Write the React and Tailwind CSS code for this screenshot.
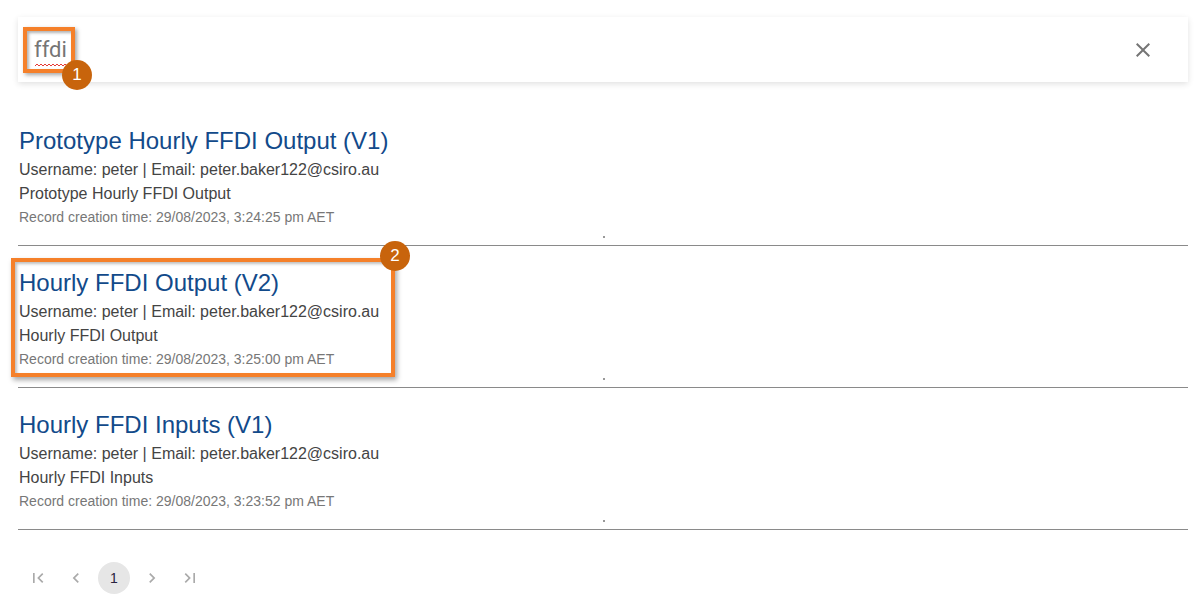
import React from 'react';

const records = [
  {
    title: 'Prototype Hourly FFDI Output (V1)',
    desc: 'Prototype Hourly FFDI Output',
    time: '29/08/2023, 3:24:25 pm AET',
  },
  {
    title: 'Hourly FFDI Output (V2)',
    desc: 'Hourly FFDI Output',
    time: '29/08/2023, 3:25:00 pm AET',
  },
  {
    title: 'Hourly FFDI Inputs (V1)',
    desc: 'Hourly FFDI Inputs',
    time: '29/08/2023, 3:23:52 pm AET',
  },
];

function Icon({ d, size = 20 }) {
  return (
    <svg width={size} height={size} viewBox="0 0 24 24" fill="currentColor">
      <path d={d} />
    </svg>
  );
}

const paths = {
  first: 'M18.41 16.59L13.82 12l4.59-4.59L17 6l-6 6 6 6zM6 6h2v12H6z',
  prev: 'M15.41 7.41L14 6l-6 6 6 6 1.41-1.41L10.83 12z',
  next: 'M10 6L8.59 7.41 13.17 12l-4.58 4.59L10 18l6-6z',
  last: 'M5.59 7.41L10.18 12l-4.59 4.59L7 18l6-6-6-6zM16 6h2v12h-2z',
  close: 'M19 6.41L17.59 5 12 10.59 6.41 5 5 6.41 10.59 12 5 17.59 6.41 19 12 13.41 17.59 19 19 17.59 13.41 12z',
};

function Badge({ n, className }) {
  return (
    <div className={`absolute w-[30px] h-[30px] rounded-full bg-[#c8640c] text-white flex items-center justify-center text-[17px] font-['Liberation_Sans',sans-serif] ${className}`}>
      {n}
    </div>
  );
}

export default function App() {
  return (
    <div className="relative w-[1200px] h-[616px] bg-white pl-[18px] pr-[12px] pt-[17px] font-['Liberation_Sans',Arial,sans-serif] overflow-hidden">
      {/* search */}
      <div className="h-[65px] bg-white shadow-[0_2px_6px_rgba(0,0,0,0.12)] flex items-center pl-4 pr-[33px]">
        <div className="relative flex-1 font-['Roboto',sans-serif] text-[22px] text-[#757575] leading-none pt-[1px]">
          ffdi
          <svg className="absolute left-[1px] top-[25px]" width="33" height="4" viewBox="0 0 33 4">
            <path d="M0 3 L2 1 L4 3 L6 1 L8 3 L10 1 L12 3 L14 1 L16 3 L18 1 L20 3 L22 1 L24 3 L26 1 L28 3 L30 1 L32 3" fill="none" stroke="#e53935" strokeWidth="1" />
          </svg>
        </div>
        <span className="text-[#757575]">
          <Icon d={paths.close} size={24} />
        </span>
      </div>

      {/* results */}
      <div className="mt-[22px]">
        {records.map((r) => (
          <div key={r.title} className="pt-[19px] pl-[1px] border-b border-[#8a8a8a]">
            <div className="text-[24px] leading-[35px] text-[#124a8a]">{r.title}</div>
            <div className="text-[16px] leading-6 text-[#444]">
              Username: peter | Email: peter.baker122@csiro.au
            </div>
            <div className="text-[16px] leading-6 text-[#444]">{r.desc}</div>
            <div className="text-[14px] leading-[22px] text-[#777]">Record creation time: {r.time}</div>
            <div className="h-[17px] flex items-center justify-center">
              <div className="w-[2px] h-[2px] bg-[#999]" />
            </div>
          </div>
        ))}
      </div>

      {/* pagination */}
      <div className="mt-[32px] ml-[4px] flex items-center gap-[6px] text-[#aaa]">
        <button className="w-8 h-8 flex items-center justify-center"><Icon d={paths.first} /></button>
        <button className="w-8 h-8 flex items-center justify-center"><Icon d={paths.prev} /></button>
        <button className="w-8 h-8 rounded-full bg-[#e6e6e6] flex items-center justify-center text-[14px] text-[#2a2340]">1</button>
        <button className="w-8 h-8 flex items-center justify-center"><Icon d={paths.next} /></button>
        <button className="w-8 h-8 flex items-center justify-center"><Icon d={paths.last} /></button>
      </div>

      {/* annotations */}
      <div className="absolute left-[23px] top-[27px] w-[52px] h-[46px] border-[4px] border-[#f5802a] shadow-[2px_2px_4px_rgba(0,0,0,0.35),inset_2px_2px_3px_rgba(0,0,0,0.3)]" />
      <Badge n="1" className="left-[62px] top-[60px]" />
      <div className="absolute left-[11px] top-[258px] w-[384px] h-[119px] border-[4px] border-[#f5802a] shadow-[2px_3px_5px_rgba(0,0,0,0.35),inset_2px_2px_3px_rgba(0,0,0,0.25)]" />
      <Badge n="2" className="left-[380px] top-[241px]" />
    </div>
  );
}
